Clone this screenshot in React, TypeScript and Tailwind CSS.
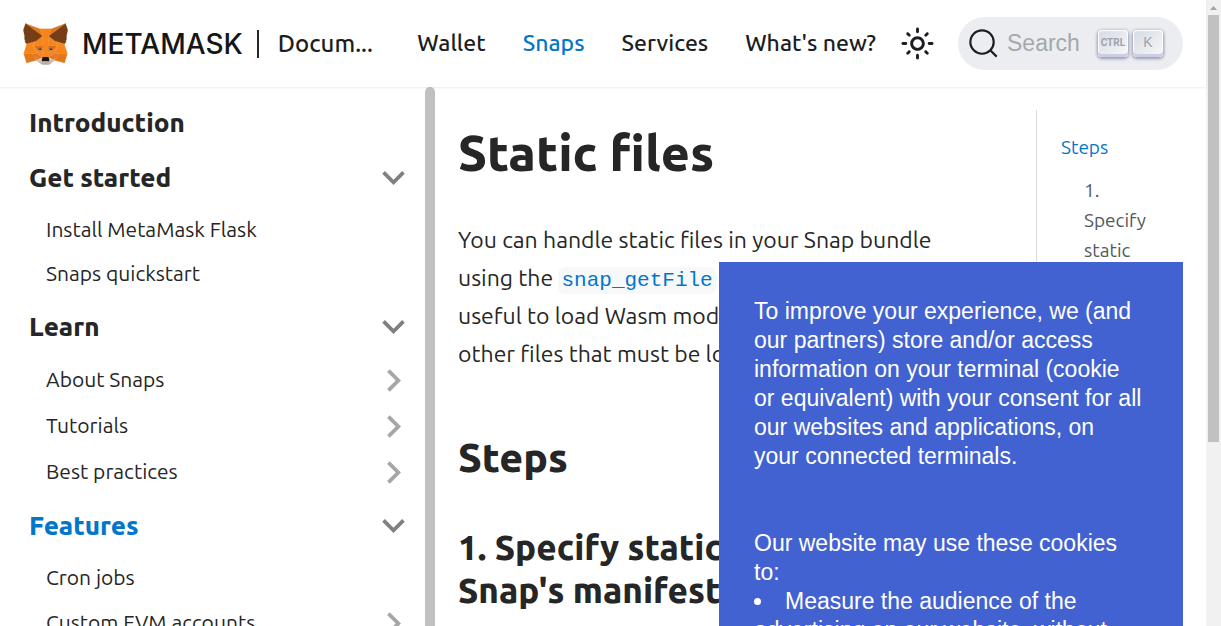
import React from "react";

const foxShapes: [string, string][] = [
  ["#e2761b", "274.1,35.5 174.6,109.4 193,65.8"],
  ["#e4761b", "44.4,35.5 143.1,110.1 125.6,65.8"],
  ["#e4761b", "238.3,206.8 211.8,247.4 268.5,263 284.8,207.7"],
  ["#e4761b", "33.9,207.7 50.1,263 106.8,247.4 80.3,206.8"],
  ["#f6851b", "103.6,138.2 87.8,162.1 144.1,164.6 142.1,104.1"],
  ["#f6851b", "214.9,138.2 175.9,103.4 174.6,164.6 230.8,162.1"],
  ["#e4761b", "106.8,247.4 140.6,230.9 111.4,208.1"],
  ["#e4761b", "177.9,230.9 211.8,247.4 207.1,208.1"],
  ["#d7c1b3", "211.8,247.4 177.9,230.9 180.6,253 180.3,262.3"],
  ["#d7c1b3", "106.8,247.4 138.3,262.3 138.1,253 140.6,230.9"],
  ["#e4761b", "106.8,247.4 111.6,206.8 80.3,207.7"],
  ["#e4761b", "207,206.8 211.8,247.4 238.3,207.7"],
  ["#f6851b", "230.8,162.1 174.6,164.6 179.8,193.5 188.1,176.1 208.1,185.2"],
  ["#f6851b", "110.6,185.2 130.6,176.1 138.8,193.5 144.1,164.6 87.8,162.1"],
  ["#f6851b", "87.8,162.1 111.4,208.1 110.6,185.2"],
  ["#f6851b", "208.1,185.2 207.1,208.1 230.8,162.1"],
  ["#f6851b", "144.1,164.6 138.8,193.5 145.4,227.6 146.9,182.7"],
  ["#f6851b", "174.6,164.6 171.9,182.6 173.1,227.6 179.8,193.5"],
  ["#f6851b", "179.8,193.5 173.1,227.6 177.9,230.9 207.1,208.1 208.1,185.2"],
  ["#f6851b", "110.6,185.2 111.4,208.1 140.6,230.9 145.4,227.6 138.8,193.5"],
  ["#c0ad9e", "180.3,262.3 180.6,253 178.1,250.8 140.4,250.8 138.1,253 138.3,262.3 106.8,247.4 117.8,256.4 140.1,271.9 178.4,271.9 200.8,256.4 211.8,247.4"],
  ["#161616", "177.9,230.9 173.1,227.6 145.4,227.6 140.6,230.9 138.1,253 140.4,250.8 178.1,250.8 180.6,253"],
  ["#763d16", "278.3,114.2 286.8,73.4 274.1,35.5 177.9,106.9 214.9,138.2 267.2,153.5 278.8,140 273.8,136.4 281.8,129.1 275.6,124.3 283.6,118.2"],
  ["#763d16", "31.8,73.4 40.3,114.2 34.9,118.2 42.9,124.3 36.8,129.1 44.8,136.4 39.8,140 51.3,153.5 103.6,138.2 140.6,106.9 44.4,35.5"],
  ["#f6851b", "267.2,153.5 214.9,138.2 230.8,162.1 207.1,208.1 238.3,207.7 284.8,207.7"],
  ["#f6851b", "103.6,138.2 51.3,153.5 33.9,207.7 80.3,207.7 111.4,208.1 87.8,162.1"],
  ["#f6851b", "174.6,164.6 177.9,106.9 193.1,65.8 125.6,65.8 140.6,106.9 144.1,164.6 145.3,182.8 145.4,227.6 173.1,227.6 173.3,182.8"],
  ["#dd6b1a", "96,164 143,166 141,186 128,176 109,184"],
  ["#dd6b1a", "222,164 175,166 177,186 190,176 209,184"],
  ["#233447", "137,191 114,185 130,176"],
  ["#233447", "181,191 188,176 204,185"],
];

function Fox() {
  return (
    <svg viewBox="30 33 258 241" className="h-[42px] w-[45px] shrink-0" aria-hidden="true">
      {foxShapes.map(([fill, points], i) => (
        <polygon key={i} fill={fill} stroke={fill} strokeWidth="1" points={points} />
      ))}
    </svg>
  );
}

function Sun() {
  return (
    <svg viewBox="0 0 24 24" className="size-[35px]" fill="#1c1e21" aria-hidden="true">
      <path d="M12,9c1.65,0,3,1.35,3,3s-1.35,3-3,3s-3-1.35-3-3S10.35,9,12,9 M12,7c-2.76,0-5,2.24-5,5s2.24,5,5,5s5-2.24,5-5 S14.76,7,12,7L12,7z M2,13l2,0c0.55,0,1-0.45,1-1s-0.45-1-1-1l-2,0c-0.55,0-1,0.45-1,1S1.45,13,2,13z M20,13l2,0c0.55,0,1-0.45,1-1 s-0.45-1-1-1l-2,0c-0.55,0-1,0.45-1,1S19.45,13,20,13z M11,2v2c0,0.55,0.45,1,1,1s1-0.45,1-1V2c0-0.55-0.45-1-1-1S11,1.45,11,2z M11,20v2c0,0.55,0.45,1,1,1s1-0.45,1-1v-2c0-0.55-0.45-1-1-1C11.45,19,11,19.45,11,20z M5.99,4.58c-0.39-0.39-1.03-0.39-1.41,0 c-0.39,0.39-0.39,1.03,0,1.41l1.06,1.06c0.39,0.39,1.03,0.39,1.41,0s0.39-1.03,0-1.41L5.99,4.58z M18.36,16.95 c-0.39-0.39-1.03-0.39-1.41,0c-0.39,0.39-0.39,1.03,0,1.41l1.06,1.06c0.39,0.39,1.03,0.39,1.41,0c0.39-0.39,0.39-1.03,0-1.41 L18.36,16.95z M19.42,5.99c0.39-0.39,0.39-1.03,0-1.41c-0.39-0.39-1.03-0.39-1.41,0l-1.06,1.06c-0.39,0.39-0.39,1.03,0,1.41 s1.03,0.39,1.41,0L19.42,5.99z M7.05,18.36c0.39-0.39,0.39-1.03,0-1.41c-0.39-0.39-1.03-0.39-1.41,0l-1.06,1.06 c-0.39,0.39-0.39,1.03,0,1.41s1.03,0.39,1.41,0L7.05,18.36z" />
    </svg>
  );
}

function Chevron({ open }: { open: boolean }) {
  return (
    <svg viewBox="0 0 24 24" className="size-[45px] shrink-0" aria-hidden="true">
      {open ? (
        <path fill="#808080" d="M7.41 8.59 12 13.17l4.59-4.58L18 10l-6 6-6-6 1.41-1.41z" />
      ) : (
        <path fill="#a6a6a6" d="M8.59 16.59 13.17 12 8.59 7.41 10 6l6 6-6 6-1.41-1.41z" />
      )}
    </svg>
  );
}

type Item = { label: string; nested?: boolean };
type Section = { label: string; active?: boolean; items: Item[] };

const sections: Section[] = [
  { label: "Get started", items: [{ label: "Install MetaMask Flask" }, { label: "Snaps quickstart" }] },
  {
    label: "Learn",
    items: [
      { label: "About Snaps", nested: true },
      { label: "Tutorials", nested: true },
      { label: "Best practices", nested: true },
    ],
  },
  { label: "Features", active: true, items: [{ label: "Cron jobs" }, { label: "Custom EVM accounts", nested: true }] },
];

function Sidebar() {
  return (
    <aside className="flex w-[435px] shrink-0 overflow-hidden">
      <nav aria-label="Docs" className="flex-1 pt-[8px] pr-[9px] pl-[29px] text-[#262626]">
        <a href="#introduction" className="flex h-[55px] items-center text-[26px] font-extrabold">
          Introduction
        </a>
        {sections.map((section) => (
          <section key={section.label}>
            <button
              type="button"
              className={`flex h-[55px] w-full items-center justify-between text-[26px] font-extrabold ${section.active ? "text-[#0376c9]" : ""}`}
            >
              {section.label}
              <Chevron open />
            </button>
            <ul className="mt-[3px] mb-[3px] pl-[17px] text-[21px]">
              {section.items.map((item) => (
                <li key={item.label}>
                  <a
                    href="#item"
                    className={`flex items-center justify-between ${item.nested ? "h-[46px]" : "h-[44px]"}`}
                  >
                    {item.label}
                    {item.nested && <Chevron open={false} />}
                  </a>
                </li>
              ))}
            </ul>
          </section>
        ))}
      </nav>
      <div className="w-[10px] rounded-t-[5px] bg-[#c1c1c1]" />
    </aside>
  );
}

const keyClass =
  "flex h-[27px] w-[30px] items-center justify-center rounded-[4px] bg-linear-to-br from-[#d5dbe4] to-[#f8f8f8] pb-[3px] text-[#a0a2a8] shadow-[inset_0_-3px_0_0_#cdcde6,inset_0_0_1px_1px_#fff,0_1px_3px_1px_rgba(30,35,90,0.4)]";

function Header() {
  const links = ["Wallet", "Snaps", "Services", "What's new?"];
  return (
    <header className="z-10 flex h-[87px] shrink-0 items-center bg-white px-[23px] text-[#1c1e21] shadow-[0_1px_2px_0_rgba(0,0,0,0.08)]">
      <div className="flex items-center">
        <a href="#home" className="flex items-center gap-[14px]">
          <Fox />
          <span className="font-['Inter',sans-serif] text-[28px] font-medium text-[#141618]">METAMASK</span>
        </a>
        <span className="mr-[19px] ml-[14px] h-7 w-[2px] bg-[#24292e]" />
        <a href="#docs" className="text-[24px] font-medium">Docum...</a>
      </div>
      <nav aria-label="Main" className="mr-6 ml-auto flex gap-[37px] text-[23px] font-medium whitespace-nowrap">
        {links.map((link) => (
          <a key={link} href="#nav" className={link === "Snaps" ? "text-[#0376c9]" : ""}>
            {link}
          </a>
        ))}
      </nav>
      <div className="flex items-center gap-[23px]">
        <button type="button" aria-label="Switch theme">
          <Sun />
        </button>
        <button
          type="button"
          className="flex h-[53px] w-[225px] items-center rounded-full bg-[#ebedf0] pl-[10px] font-['Liberation_Sans',sans-serif] text-[#a4a8ad]"
        >
          <svg viewBox="0 0 20 20" className="size-[31px]" fill="none" stroke="#1c1e21" strokeWidth="1.4" strokeLinecap="round" aria-hidden="true">
            <path d="M14.386 14.386l4.0877 4.0877-4.0877-4.0877c-2.9418 2.9419-7.7115 2.9419-10.6533 0-2.9419-2.9418-2.9419-7.7115 0-10.6533 2.9418-2.9419 7.7115-2.9419 10.6533 0 2.9419 2.9418 2.9419 7.7115 0 10.6533z" />
          </svg>
          <span className="mr-[18px] ml-2 text-[23px]">Search</span>
          <span className="flex gap-[5px]">
            <kbd className={`${keyClass} font-['Roboto',sans-serif] text-[10px] font-bold`}>CTRL</kbd>
            <kbd className={`${keyClass} font-['Liberation_Sans',sans-serif] text-[14px]`}>K</kbd>
          </span>
        </button>
      </div>
    </header>
  );
}

function Article() {
  return (
    <article className="min-w-0 flex-1 pt-[36px] pl-[23px] text-[#262626]">
      <h1 className="text-[50px] leading-[58px] font-extrabold">Static files</h1>
      <p className="mt-[40px] w-[500px] text-[23px] leading-[38px]">
        You can handle static files in your Snap bundle
        <br />
        using the{" "}
        <code className="rounded-[7px] bg-[#f6f8fa] px-[3px] py-[2px] font-['Liberation_Mono',monospace] text-[21px] leading-none text-[#0376c9]">
          snap_getFile
        </code>{" "}
        method. This is
        <br />
        useful to load Wasm modules, or
        <br />
        other files that must be loaded.
      </p>
      <h2 className="mt-[59px] text-[41px] leading-[50px] font-extrabold">Steps</h2>
      <h3 className="mt-[44px] text-[35px] leading-[43px] font-extrabold whitespace-nowrap">
        1. Specify static files in the
        <br />
        Snap's manifest file
      </h3>
    </article>
  );
}

function Toc() {
  return (
    <nav aria-label="On this page" className="mt-[23px] w-[170px] shrink-0 border-l border-[#dadde1] pt-[22px] pl-6 text-[19px] leading-[30px]">
      <a href="#steps" className="text-[#0376c9]">Steps</a>
      <a href="#specify" className="mt-[13px] ml-[23px] block w-16 text-[#525860]">
        1. <br />
        Specify <br />
        static files
      </a>
    </nav>
  );
}

function CookieNotice() {
  return (
    <div
      role="dialog"
      aria-label="Cookies"
      className="absolute top-[262px] right-[38px] bottom-0 z-20 w-[464px] overflow-hidden bg-[#4262d1] pt-[35px] pr-[39px] pl-[35px] font-['Liberation_Sans',sans-serif] text-[23px] leading-[29px] text-white"
    >
      <p>
        To improve your experience, we (and our partners) store and/or access information on your terminal (cookie or
        equivalent) with your consent for all our websites and applications, on your connected terminals.
      </p>
      <p className="mt-[58px]">Our website may use these cookies to:</p>
      <ul className="list-inside list-disc">
        <li>Measure the audience of the advertising on our website, without profiling</li>
      </ul>
    </div>
  );
}

function PageScrollbar() {
  return (
    <div className="flex w-[15px] shrink-0 flex-col items-center bg-[#f1f1f1]" aria-hidden="true">
      <svg viewBox="0 0 15 15" className="size-[15px] shrink-0">
        <path d="M4 10 7.5 6 11 10z" fill="#a3a3a3" />
      </svg>
      <div className="h-[427px] w-[11px] bg-[#c1c1c1]" />
    </div>
  );
}

export default function App() {
  return (
    <div className="relative flex h-screen overflow-hidden bg-white font-['Ubuntu','Noto_Sans',sans-serif]">
      <div className="flex min-w-0 flex-1 flex-col">
        <Header />
        <div className="flex min-h-0 flex-1">
          <Sidebar />
          <Article />
          <Toc />
        </div>
      </div>
      <PageScrollbar />
      <CookieNotice />
    </div>
  );
}
